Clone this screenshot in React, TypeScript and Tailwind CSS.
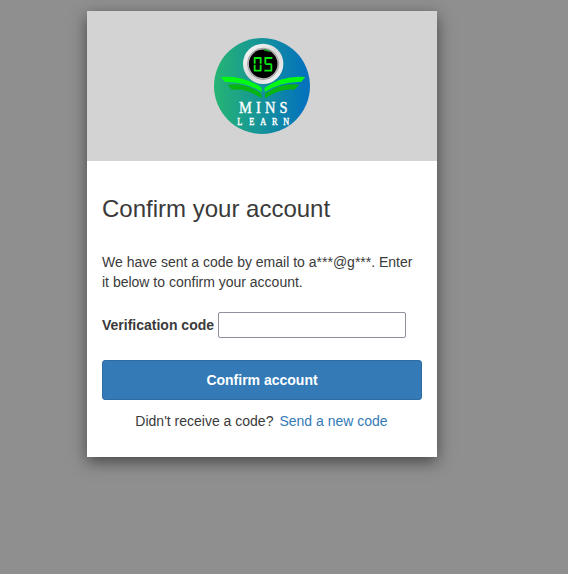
function Logo() {
  return (
    <svg className="block h-24 w-24" viewBox="30 24 288 288" role="img" aria-label="05 Mins Learn">
      <defs>
        <linearGradient id="disc" x1="0" y1="0" x2="1" y2="0">
          <stop offset="0" stopColor="#25b573" />
          <stop offset="0.5" stopColor="#15929a" />
          <stop offset="0.95" stopColor="#0472bd" />
        </linearGradient>
        <linearGradient id="rim" x1="0" y1="0" x2="1" y2="1">
          <stop offset="0" stopColor="#ffffff" />
          <stop offset="0.5" stopColor="#d8d8d8" />
          <stop offset="1" stopColor="#f8f8f8" />
        </linearGradient>
      </defs>
      <circle cx="174" cy="168" r="144" fill="url(#disc)" />
      <path d="M70 164 Q126 158 172 191 L172 205 Q130 175 84 179 Z" fill="#08b40f" />
      <path d="M286 164 Q228 158 183 191 L183 205 Q226 175 271 179 Z" fill="#08b40f" />
      <path d="M50 141 Q116 134 173 173 L173 186 Q120 153 63 156 Z" fill="#04fa12" />
      <path d="M304 141 Q239 134 182 173 L182 186 Q235 153 291 156 Z" fill="#04fa12" />
      <circle cx="177.5" cy="101.5" r="60.5" fill="url(#rim)" />
      <circle cx="177.5" cy="101.5" r="47" fill="#c4c4c4" stroke="#999999" strokeWidth="2.5" />
      <circle cx="177.5" cy="101.5" r="43" fill="#000000" />
      <path d="M180 60 A42 42 0 0 1 198 65" fill="none" stroke="#069b12" strokeWidth="4" />
      <g fill="none" stroke="#07e914" strokeWidth="5.5">
        <path d="M152 84 H171 M152 82 V101 M152 104 V124 M170 82 V101 M170 104 V124 M152 122 H171" />
        <path d="M205 84 H182 M184 82 V101 M184 102.500 H203 M202 103 V124 M204 122 H181" />
      </g>
      <g fill="#ffffff" stroke="#ffffff" strokeWidth="1.2" fontFamily="'Liberation Serif', serif">
        <text transform="translate(0 249) scale(0.85 1)" x="124 183.500 215.500 266.500" y="0" fontSize="51">MINS</text>
        <text transform="translate(0 284) scale(0.85 1)" x="117.600 160 198.200 240 280" y="0" fontSize="29">LEARN</text>
      </g>
    </svg>
  );
}

export default function App() {
  return (
    <main className="h-screen overflow-hidden bg-[#8f8f8f] pt-[11px] pl-[87px] font-['Liberation_Sans',Arial,sans-serif] text-sm leading-5 text-[#3a3a3a]">
      <section className="h-[446px] w-[350px] bg-white shadow-[0_5px_15px_rgba(0,0,0,0.5)]">
        <header className="flex h-[150px] justify-center bg-[#d3d3d3] pt-[27px]">
          <Logo />
        </header>
        <form className="px-[15px] pt-[35px]" onSubmit={(e) => e.preventDefault()}>
          <h1 className="text-2xl leading-[26px]">Confirm your account</h1>
          <p className="mt-[30px]">
            We have sent a code by email to a***@g***. Enter it below to confirm your account.
          </p>
          <div className="mt-5 flex h-[26px] items-center gap-1">
            <label htmlFor="code" className="font-bold">Verification code</label>
            <input id="code" type="text" className="h-[26px] w-[188px] rounded-[2px] border border-[#8f8f9d] bg-white px-1 outline-none" />
          </div>
          <button type="submit" className="mt-[22px] block h-10 w-full rounded-[3px] border border-[#2e6da4] bg-[#337ab7] font-bold text-white">
            Confirm account
          </button>
          <p className="mt-[11px] flex justify-center gap-1.5 pr-px">
            <span>Didn't receive a code?</span>
            <a href="#" className="text-[#337ab7]">Send a new code</a>
          </p>
        </form>
      </section>
    </main>
  );
}
